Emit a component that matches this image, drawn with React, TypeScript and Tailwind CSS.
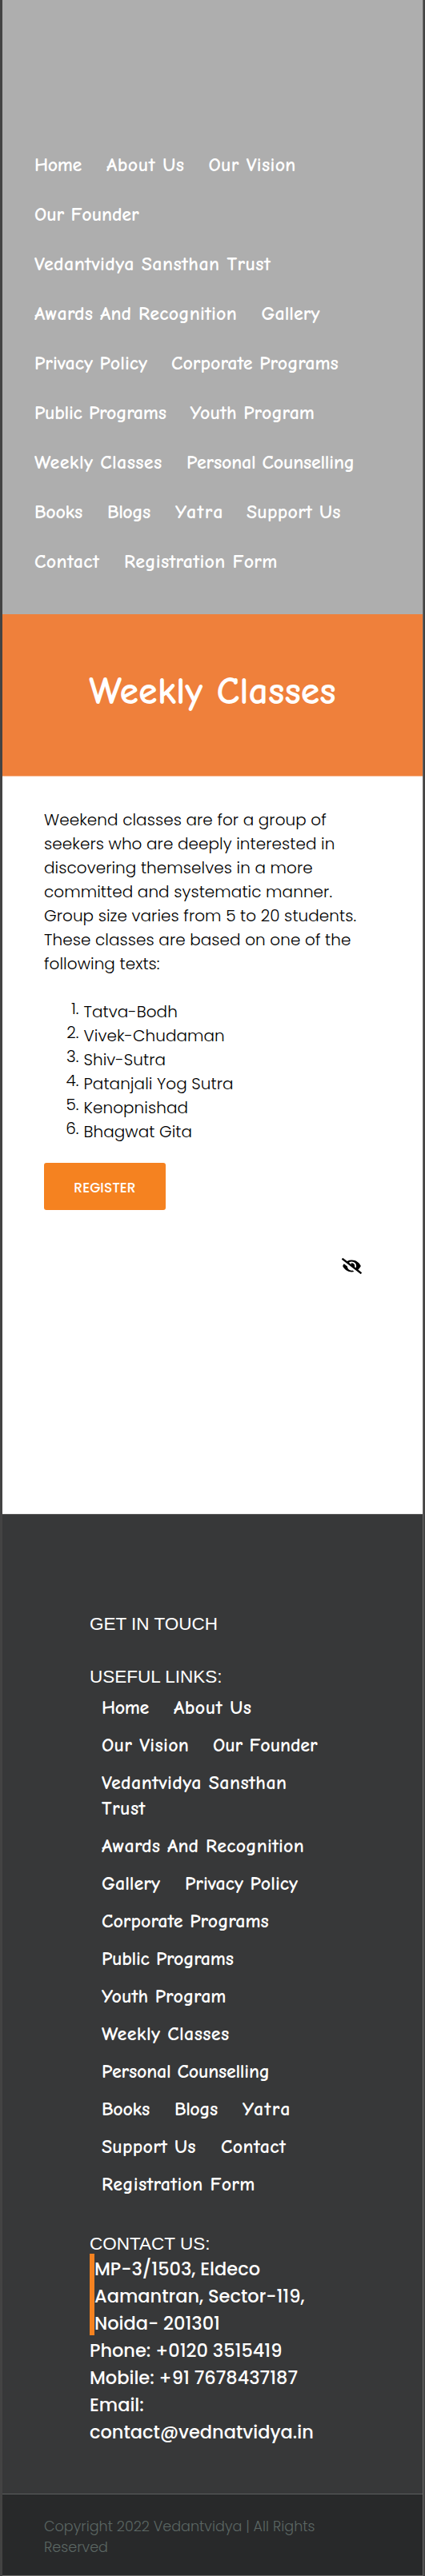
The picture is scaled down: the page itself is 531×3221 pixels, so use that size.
import { Fragment } from "react";
import { FaEyeSlash } from "react-icons/fa";

type NavItem = { label: string; cls: string };

const links: NavItem[] = [
  { label: "Home", cls: "w-[90px] tracking-[-0.4px]" },
  { label: "About Us", cls: "w-[127.5px] tracking-[0.51px]" },
  { label: "Our Vision", cls: "w-[139px] tracking-[0.3px]" },
  { label: "Our Founder", cls: "w-[163px] tracking-[-0.11px]" },
  { label: "Vedantvidya Sansthan Trust", cls: "max-w-[326px] pr-[28px] tracking-[0.42px]" },
  { label: "Awards And Recognition", cls: "w-[283.5px] tracking-[0.2px]" },
  { label: "Gallery", cls: "w-[104px]" },
  { label: "Privacy Policy", cls: "w-[171px]" },
  { label: "Corporate Programs", cls: "w-[239px]" },
  { label: "Public Programs", cls: "w-[194.5px] tracking-[-0.24px]" },
  { label: "Youth Program", cls: "w-[185px] tracking-[0.05px]" },
  { label: "Weekly Classes", cls: "w-[190px] tracking-[0.38px]" },
  { label: "Personal Counselling", cls: "w-[238px] tracking-[-0.24px]" },
  { label: "Books", cls: "w-[91px] tracking-[-0.3px]" },
  { label: "Blogs", cls: "w-[85px] tracking-[-0.5px]" },
  { label: "Yatra", cls: "w-[89px] tracking-[1.4px]" },
  { label: "Support Us", cls: "w-[149px] tracking-[0.25px]" },
  { label: "Contact", cls: "w-[112px] tracking-[0.38px]" },
  { label: "Registration Form", cls: "w-[220px] tracking-[0.29px]" },
];

const texts = [
  "Tatva-Bodh",
  "Vivek-Chudaman",
  "Shiv-Sutra",
  "Patanjali Yog Sutra",
  "Kenopnishad",
  "Bhagwat Gita",
];

const intro = [
  "Weekend classes are for a group of",
  "seekers who are deeply interested in",
  "discovering themselves in a more",
  "committed and systematic manner.",
  "Group size varies from 5 to 20 students.",
  "These classes are based on one of the",
  "following texts:",
];

function Header() {
  return (
    <header className="h-[768px] shrink-0 bg-[#aeaeae] pt-[175px] pl-[40px]">
      <nav className="flex w-[435px] flex-wrap font-['Comic_Neue','Comic_Sans_MS',cursive] text-[24px] leading-[32px] font-bold text-white">
        {links.map(({ label, cls }) => (
          <a key={label} className={`my-[15px] shrink-0 whitespace-nowrap ${cls}`}>
            {label}
          </a>
        ))}
      </nav>
    </header>
  );
}

function FooterLinks() {
  return (
    <nav className="mt-[7px] ml-[15px] flex w-[306px] flex-wrap font-['Comic_Neue','Comic_Sans_MS',cursive] text-[24px] leading-[32px] font-bold text-white">
      {links.map(({ label, cls }) => (
        <a key={label} className={`mb-[15px] shrink-0 ${cls}`}>
          {label === "Vedantvidya Sansthan Trust" ? (
            <>
              Vedantvidya Sansthan
              <br />
              Trust
            </>
          ) : (
            label
          )}
        </a>
      ))}
    </nav>
  );
}

export default function App() {
  return (
    <div className="h-[3221px] border-r-2 border-l-[3px] border-[#434343] bg-white">
      <div className="flex h-full flex-col border-r border-b border-[#6b6968]">
        <Header />
        <section className="flex h-[203px] shrink-0 justify-center border-b border-[#f9bf9a] bg-[#ef803b] pt-[67px]">
          <h1 className="font-['Comic_Neue','Comic_Sans_MS',cursive] text-[48px] leading-[60px] font-bold text-white">
            Weekly Classes
          </h1>
        </section>
        <main className="flex h-[922px] shrink-0 flex-col items-start pt-[39px] pl-[52px] font-['Poppins','Inter',sans-serif] text-[20px] leading-[30px] font-light tracking-[0.06px] text-black">
          <p>
            {intro.map((line) => (
              <Fragment key={line}>
                {line}
                <br />
              </Fragment>
            ))}
          </p>
          <ol className="mt-[30px] ml-[20px]">
            {texts.map((t, i) => (
              <li key={t} className="flex">
                <span className="-mt-1 mr-[6px] w-[23.5px] text-right">{i + 1}.</span>
                {t}
              </li>
            ))}
          </ol>
          <button className="mt-[24px] h-[58.5px] w-[152px] shrink-0 rounded-[3px] bg-[#f58220] pt-[3px] text-[17px] font-medium text-white">
            REGISTER
          </button>
          <FaEyeSlash className="mt-[60px] ml-[372px] h-5 w-[25px] shrink-0" />
        </main>
        <footer className="h-[1225px] shrink-0 border-t border-[#5d5d5d] bg-[#373839] pt-[122px] pl-[109px] text-white">
          <h2 className="font-['Liberation_Sans',sans-serif] text-[22.5px] leading-[30px]">GET IN TOUCH</h2>
          <h2 className="mt-[36px] font-['Liberation_Sans',sans-serif] text-[22.5px] leading-[30px]">
            USEFUL LINKS:
          </h2>
          <FooterLinks />
          <h2 className="mt-[32px] font-['Liberation_Sans',sans-serif] text-[22.5px] leading-[24px]">
            CONTACT US:
          </h2>
          <address className="font-['Poppins','Inter',sans-serif] text-[22.5px] leading-[34px] font-medium not-italic">
            <div className="h-[102px] border-l-[6px] border-[#f58220] pt-[2px]">
              MP-3/1503, Eldeco
              <br />
              Aamantran, Sector-119,
              <br />
              Noida- 201301
            </div>
            <div className="pt-[2px]">
              <p>Phone: +0120 3515419</p>
              <p>Mobile: +91 7678437187</p>
              <p>Email:</p>
              <p>contact@vednatvidya.in</p>
            </div>
          </address>
        </footer>
        <div className="grow border-t border-[#5d5f60] bg-[#28292a] pt-[27px] pl-[52px] font-['Poppins','Inter',sans-serif] text-[17.6px] leading-[26px] font-light text-[#5b6663]">
          <p>
            Copyright 2022 Vedantvidya | All Rights
            <br />
            Reserved
          </p>
        </div>
      </div>
    </div>
  );
}
